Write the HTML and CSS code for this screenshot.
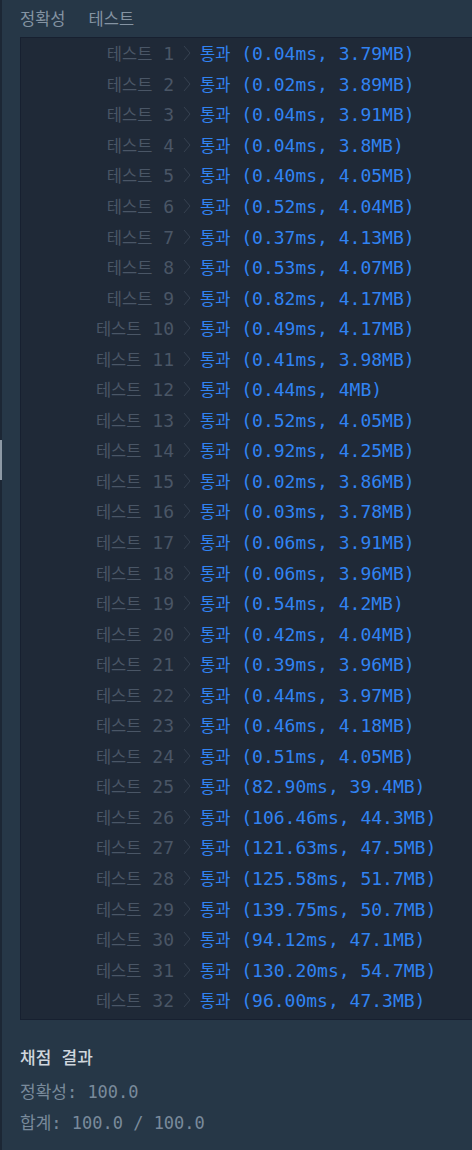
FILE: index.html
```html
<!DOCTYPE html>
<html lang="ko">
<head>
    <meta charset="UTF-8">
    <meta name="viewport" content="width=device-width, initial-scale=1.0">
    <title>채점 결과</title>
    <link rel="stylesheet" href="styles.css">
</head>
<body>
    <div class="panel">
        <div class="handle"></div>
        <div class="tabs">
            <span class="tab">정확성</span>
            <span class="tab">테스트</span>
        </div>
        <div class="console">
            <div class="row"><span class="label"><span class="ko">테스트</span> 1</span><span class="arrow"><svg width="8" height="16" viewBox="0 0 8 16"><polyline points="1,1 7,8 1,15"/></svg></span><span class="result"><span class="ko">통과</span> (0.04ms, 3.79MB)</span></div>
            <div class="row"><span class="label"><span class="ko">테스트</span> 2</span><span class="arrow"><svg width="8" height="16" viewBox="0 0 8 16"><polyline points="1,1 7,8 1,15"/></svg></span><span class="result"><span class="ko">통과</span> (0.02ms, 3.89MB)</span></div>
            <div class="row"><span class="label"><span class="ko">테스트</span> 3</span><span class="arrow"><svg width="8" height="16" viewBox="0 0 8 16"><polyline points="1,1 7,8 1,15"/></svg></span><span class="result"><span class="ko">통과</span> (0.04ms, 3.91MB)</span></div>
            <div class="row"><span class="label"><span class="ko">테스트</span> 4</span><span class="arrow"><svg width="8" height="16" viewBox="0 0 8 16"><polyline points="1,1 7,8 1,15"/></svg></span><span class="result"><span class="ko">통과</span> (0.04ms, 3.8MB)</span></div>
            <div class="row"><span class="label"><span class="ko">테스트</span> 5</span><span class="arrow"><svg width="8" height="16" viewBox="0 0 8 16"><polyline points="1,1 7,8 1,15"/></svg></span><span class="result"><span class="ko">통과</span> (0.40ms, 4.05MB)</span></div>
            <div class="row"><span class="label"><span class="ko">테스트</span> 6</span><span class="arrow"><svg width="8" height="16" viewBox="0 0 8 16"><polyline points="1,1 7,8 1,15"/></svg></span><span class="result"><span class="ko">통과</span> (0.52ms, 4.04MB)</span></div>
            <div class="row"><span class="label"><span class="ko">테스트</span> 7</span><span class="arrow"><svg width="8" height="16" viewBox="0 0 8 16"><polyline points="1,1 7,8 1,15"/></svg></span><span class="result"><span class="ko">통과</span> (0.37ms, 4.13MB)</span></div>
            <div class="row"><span class="label"><span class="ko">테스트</span> 8</span><span class="arrow"><svg width="8" height="16" viewBox="0 0 8 16"><polyline points="1,1 7,8 1,15"/></svg></span><span class="result"><span class="ko">통과</span> (0.53ms, 4.07MB)</span></div>
            <div class="row"><span class="label"><span class="ko">테스트</span> 9</span><span class="arrow"><svg width="8" height="16" viewBox="0 0 8 16"><polyline points="1,1 7,8 1,15"/></svg></span><span class="result"><span class="ko">통과</span> (0.82ms, 4.17MB)</span></div>
            <div class="row"><span class="label"><span class="ko">테스트</span> 10</span><span class="arrow"><svg width="8" height="16" viewBox="0 0 8 16"><polyline points="1,1 7,8 1,15"/></svg></span><span class="result"><span class="ko">통과</span> (0.49ms, 4.17MB)</span></div>
            <div class="row"><span class="label"><span class="ko">테스트</span> 11</span><span class="arrow"><svg width="8" height="16" viewBox="0 0 8 16"><polyline points="1,1 7,8 1,15"/></svg></span><span class="result"><span class="ko">통과</span> (0.41ms, 3.98MB)</span></div>
            <div class="row"><span class="label"><span class="ko">테스트</span> 12</span><span class="arrow"><svg width="8" height="16" viewBox="0 0 8 16"><polyline points="1,1 7,8 1,15"/></svg></span><span class="result"><span class="ko">통과</span> (0.44ms, 4MB)</span></div>
            <div class="row"><span class="label"><span class="ko">테스트</span> 13</span><span class="arrow"><svg width="8" height="16" viewBox="0 0 8 16"><polyline points="1,1 7,8 1,15"/></svg></span><span class="result"><span class="ko">통과</span> (0.52ms, 4.05MB)</span></div>
            <div class="row"><span class="label"><span class="ko">테스트</span> 14</span><span class="arrow"><svg width="8" height="16" viewBox="0 0 8 16"><polyline points="1,1 7,8 1,15"/></svg></span><span class="result"><span class="ko">통과</span> (0.92ms, 4.25MB)</span></div>
            <div class="row"><span class="label"><span class="ko">테스트</span> 15</span><span class="arrow"><svg width="8" height="16" viewBox="0 0 8 16"><polyline points="1,1 7,8 1,15"/></svg></span><span class="result"><span class="ko">통과</span> (0.02ms, 3.86MB)</span></div>
            <div class="row"><span class="label"><span class="ko">테스트</span> 16</span><span class="arrow"><svg width="8" height="16" viewBox="0 0 8 16"><polyline points="1,1 7,8 1,15"/></svg></span><span class="result"><span class="ko">통과</span> (0.03ms, 3.78MB)</span></div>
            <div class="row"><span class="label"><span class="ko">테스트</span> 17</span><span class="arrow"><svg width="8" height="16" viewBox="0 0 8 16"><polyline points="1,1 7,8 1,15"/></svg></span><span class="result"><span class="ko">통과</span> (0.06ms, 3.91MB)</span></div>
            <div class="row"><span class="label"><span class="ko">테스트</span> 18</span><span class="arrow"><svg width="8" height="16" viewBox="0 0 8 16"><polyline points="1,1 7,8 1,15"/></svg></span><span class="result"><span class="ko">통과</span> (0.06ms, 3.96MB)</span></div>
            <div class="row"><span class="label"><span class="ko">테스트</span> 19</span><span class="arrow"><svg width="8" height="16" viewBox="0 0 8 16"><polyline points="1,1 7,8 1,15"/></svg></span><span class="result"><span class="ko">통과</span> (0.54ms, 4.2MB)</span></div>
            <div class="row"><span class="label"><span class="ko">테스트</span> 20</span><span class="arrow"><svg width="8" height="16" viewBox="0 0 8 16"><polyline points="1,1 7,8 1,15"/></svg></span><span class="result"><span class="ko">통과</span> (0.42ms, 4.04MB)</span></div>
            <div class="row"><span class="label"><span class="ko">테스트</span> 21</span><span class="arrow"><svg width="8" height="16" viewBox="0 0 8 16"><polyline points="1,1 7,8 1,15"/></svg></span><span class="result"><span class="ko">통과</span> (0.39ms, 3.96MB)</span></div>
            <div class="row"><span class="label"><span class="ko">테스트</span> 22</span><span class="arrow"><svg width="8" height="16" viewBox="0 0 8 16"><polyline points="1,1 7,8 1,15"/></svg></span><span class="result"><span class="ko">통과</span> (0.44ms, 3.97MB)</span></div>
            <div class="row"><span class="label"><span class="ko">테스트</span> 23</span><span class="arrow"><svg width="8" height="16" viewBox="0 0 8 16"><polyline points="1,1 7,8 1,15"/></svg></span><span class="result"><span class="ko">통과</span> (0.46ms, 4.18MB)</span></div>
            <div class="row"><span class="label"><span class="ko">테스트</span> 24</span><span class="arrow"><svg width="8" height="16" viewBox="0 0 8 16"><polyline points="1,1 7,8 1,15"/></svg></span><span class="result"><span class="ko">통과</span> (0.51ms, 4.05MB)</span></div>
            <div class="row"><span class="label"><span class="ko">테스트</span> 25</span><span class="arrow"><svg width="8" height="16" viewBox="0 0 8 16"><polyline points="1,1 7,8 1,15"/></svg></span><span class="result"><span class="ko">통과</span> (82.90ms, 39.4MB)</span></div>
            <div class="row"><span class="label"><span class="ko">테스트</span> 26</span><span class="arrow"><svg width="8" height="16" viewBox="0 0 8 16"><polyline points="1,1 7,8 1,15"/></svg></span><span class="result"><span class="ko">통과</span> (106.46ms, 44.3MB)</span></div>
            <div class="row"><span class="label"><span class="ko">테스트</span> 27</span><span class="arrow"><svg width="8" height="16" viewBox="0 0 8 16"><polyline points="1,1 7,8 1,15"/></svg></span><span class="result"><span class="ko">통과</span> (121.63ms, 47.5MB)</span></div>
            <div class="row"><span class="label"><span class="ko">테스트</span> 28</span><span class="arrow"><svg width="8" height="16" viewBox="0 0 8 16"><polyline points="1,1 7,8 1,15"/></svg></span><span class="result"><span class="ko">통과</span> (125.58ms, 51.7MB)</span></div>
            <div class="row"><span class="label"><span class="ko">테스트</span> 29</span><span class="arrow"><svg width="8" height="16" viewBox="0 0 8 16"><polyline points="1,1 7,8 1,15"/></svg></span><span class="result"><span class="ko">통과</span> (139.75ms, 50.7MB)</span></div>
            <div class="row"><span class="label"><span class="ko">테스트</span> 30</span><span class="arrow"><svg width="8" height="16" viewBox="0 0 8 16"><polyline points="1,1 7,8 1,15"/></svg></span><span class="result"><span class="ko">통과</span> (94.12ms, 47.1MB)</span></div>
            <div class="row"><span class="label"><span class="ko">테스트</span> 31</span><span class="arrow"><svg width="8" height="16" viewBox="0 0 8 16"><polyline points="1,1 7,8 1,15"/></svg></span><span class="result"><span class="ko">통과</span> (130.20ms, 54.7MB)</span></div>
            <div class="row"><span class="label"><span class="ko">테스트</span> 32</span><span class="arrow"><svg width="8" height="16" viewBox="0 0 8 16"><polyline points="1,1 7,8 1,15"/></svg></span><span class="result"><span class="ko">통과</span> (96.00ms, 47.3MB)</span></div>
        </div>
        <div class="summary">
            <h4 class="summary-title">채점 결과</h4>
            <div class="summary-line">정확성: 100.0</div>
            <div class="summary-line">합계: 100.0 / 100.0</div>
        </div>
    </div>
</body>
</html>
```

FILE: styles.css
```css
html, body {
    margin: 0;
    padding: 0;
    background: #263747;
    height: 100%;
    overflow: hidden;
}
body {
    font-family: "DejaVu Sans Mono", "Noto Sans CJK KR", monospace;
    font-size: 18px;
}
.panel {
    position: relative;
    min-height: 100vh;
    border-left: 2px solid #1c2735;
    box-sizing: border-box;
    padding: 0 0 0 18px;
}
.handle {
    position: absolute;
    left: -2px;
    top: 440px;
    width: 2px;
    height: 40px;
    background: #8d9aa6;
}
.tabs {
    display: flex;
    gap: 23px;
    height: 37px;
    align-items: center;
    padding-bottom: 1px;
    box-sizing: border-box;
}
.tab {
    font-family: "Noto Sans CJK KR", sans-serif;
    font-size: 16.5px;
    color: #8493a2;
}
.console {
    background: #1f2937;
    border: 1px solid #172030;
    border-right: none;
    margin-right: -10px;
    padding: 0 0 3px;
}
.row {
    display: grid;
    grid-template-columns: 153px 26px 1fr;
    height: 30.55px;
    align-items: center;
    white-space: nowrap;
}
.ko {
    font-size: 16.5px;
}
.label {
    text-align: right;
    color: #4a5666;
}
.arrow {
    display: flex;
    justify-content: center;
}
.arrow svg {
    fill: none;
    stroke: #364150;
    stroke-width: 1;
}
.result {
    color: #3183f2;
}
.summary {
    padding-top: 24px;
}
.summary-title {
    margin: 0 0 8px;
    font-size: 17px;
    font-weight: 500;
    color: #cfd6dd;
}
.summary-line {
    color: #798a9b;
    height: 31px;
    line-height: 31px;
    font-size: 17px;
}
```
